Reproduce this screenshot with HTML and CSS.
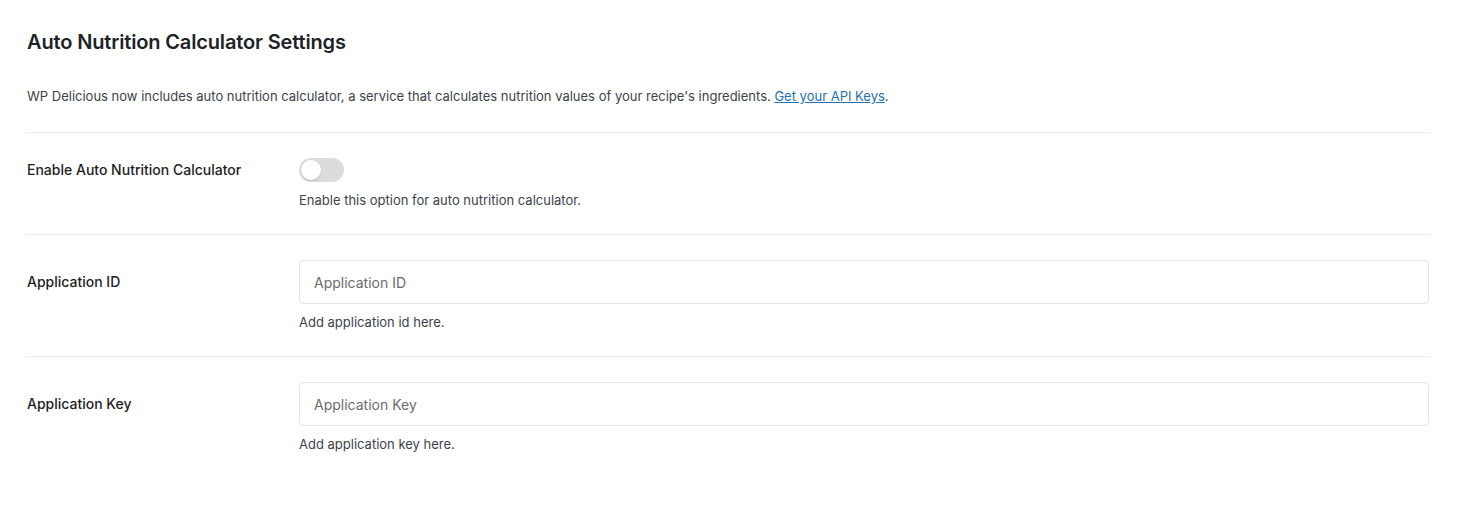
FILE: index.html
```html
<!DOCTYPE html>
<html>
<head>
<meta charset="utf-8">
<link rel="stylesheet" href="styles.css">
</head>
<body>
<div class="page">
  <h1 class="title">Auto Nutrition Calculator Settings</h1>
  <p class="intro">WP Delicious now includes auto nutrition calculator, a service that calculates nutrition values of your recipe's ingredients. <a href="#" class="link">Get your API Keys</a>.</p>
  <div class="row row-toggle">
    <div class="label">Enable Auto Nutrition Calculator</div>
    <div class="field">
      <span class="toggle"><span class="knob"></span></span>
      <div class="help">Enable this option for auto nutrition calculator.</div>
    </div>
  </div>
  <div class="row">
    <div class="label">Application ID</div>
    <div class="field">
      <input class="input" type="text" placeholder="Application ID">
      <div class="help">Add application id here.</div>
    </div>
  </div>
  <div class="row">
    <div class="label">Application Key</div>
    <div class="field">
      <input class="input" type="text" placeholder="Application Key">
      <div class="help">Add application key here.</div>
    </div>
  </div>
</div>
</body>
</html>
```
FILE: styles.css
```css
* { box-sizing: border-box; }
body {
  margin: 0;
  background: #ffffff;
  font-family: Inter, "Noto Sans", sans-serif;
  color: #1e1e1e;
}
.page {
  width: 1429px;
  padding: 30px 0 0 27px;
}
.title {
  margin: 0;
  font-size: 20px;
  font-weight: 600;
  line-height: 24px;
  color: #1d2327;
  letter-spacing: -0.15px;
}
.intro {
  margin: 32px 0 0;
  font-size: 13px;
  line-height: 20px;
  color: #3c434a;
  padding-bottom: 26px;
  border-bottom: 1px solid #ececec;
}
.link {
  color: #2271b1;
  text-decoration: underline;
}
.row {
  display: flex;
  padding: 25px 0 24px;
  border-bottom: 1px solid #ececec;
}
.row:last-child { border-bottom: none; }
.label {
  width: 272px;
  flex-shrink: 0;
  font-size: 14px;
  font-weight: 500;
  line-height: 20px;
  color: #1e1e1e;
  align-self: flex-start;
  margin-top: 12px;
}
.row-toggle .label { margin-top: 2px; }
.row-toggle { padding-top: 25px; padding-bottom: 24px; }
.field {
  flex: 1;
  display: flex;
  flex-direction: column;
}
.toggle {
  display: block;
  width: 45px;
  height: 24px;
  border-radius: 12px;
  background: #dcdcdc;
  position: relative;
}
.knob {
  position: absolute;
  left: 2px;
  top: 2px;
  width: 20px;
  height: 20px;
  border-radius: 50%;
  background: #ffffff;
  box-shadow: 0 1px 2px rgba(0,0,0,0.15);
}
.input {
  width: 100%;
  height: 44px;
  border: 1px solid #e6e6e6;
  border-radius: 4px;
  padding: 0 14px;
  font-family: Inter, "Noto Sans", sans-serif;
  font-size: 14px;
  color: #1e1e1e;
  background: #fff;
  outline: none;
}
.input::placeholder { color: #6b6b6b; }
.help {
  margin-top: 8px;
  font-size: 13px;
  line-height: 20px;
  color: #3c434a;
}
```
